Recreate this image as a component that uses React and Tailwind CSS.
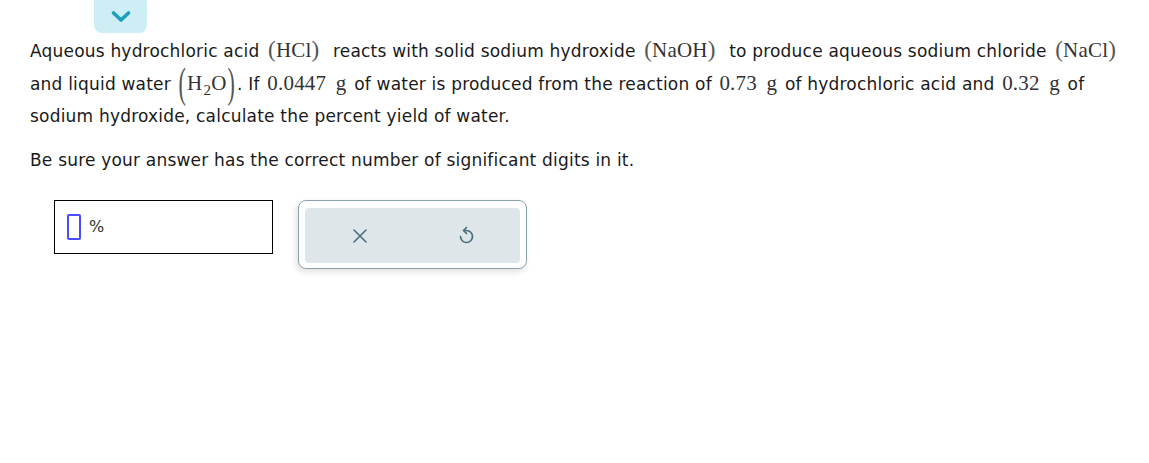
import React from "react";

const SERIF = { fontFamily: '"Liberation Serif", serif' };

const M = ({ children, className = "" }) => (
  <span className={`text-[#333] text-[21px] ${className}`} style={SERIF}>
    {children}
  </span>
);

const P = ({ children }) => (
  <span className="inline-block text-[#555] text-[23px] leading-[20px]" style={SERIF}>
    {children}
  </span>
);

const BP = ({ children }) => (
  <span
    className="inline-block text-[#555] text-[22px] leading-[20px] scale-y-[1.95] origin-center px-[1px]"
    style={SERIF}
  >
    {children}
  </span>
);

export default function App() {
  return (
    <div
      className="w-[1149px] h-[463px] bg-white text-[#1a1a1a] text-[17px] tracking-[0.2px]"
      style={{ fontFamily: '"DejaVu Sans", Verdana, sans-serif' }}
    >
      <div className="ml-[94px] w-[53px] h-[33px] bg-[#cdeef4] rounded-b-lg flex items-center justify-center">
        <svg width="22" height="13" viewBox="0 0 22 13">
          <path d="M3.5 3 L11 10 L18.5 3" fill="none" stroke="#1a9fbe" strokeWidth="3.6" strokeLinecap="round" strokeLinejoin="round" />
        </svg>
      </div>
      <div className="pl-[30px] mt-[1px] leading-[32px] whitespace-nowrap">
        <div>
          Aqueous hydrochloric acid{" "}
          <M className="ml-[3px] mr-[8px]"><P>(</P>HCl<P>)</P></M>{" "}
          reacts with solid sodium hydroxide{" "}
          <M className="ml-[3px] mr-[8px]"><P>(</P>NaOH<P>)</P></M>{" "}
          to produce aqueous sodium chloride{" "}
          <M className="ml-[3px]"><P>(</P>NaCl<P>)</P></M>
        </div>
        <div>
          and liquid water{" "}
          <M className="ml-[1px] mr-[1px]"><BP>(</BP>H<sub className="text-[15px] relative top-[5px] ml-[1px]">2</sub>O<BP>)</BP></M>. If{" "}
          <M className="mx-[2px]">0.0447</M> <M className="mx-[2px]">g</M> of water is produced from the reaction of{" "}
          <M className="mx-[2px]">0.73</M> <M className="mx-[2px]">g</M> of hydrochloric acid and{" "}
          <M className="mx-[2px]">0.32</M> <M className="mx-[2px]">g</M> of
        </div>
        <div>sodium hydroxide, calculate the percent yield of water.</div>
        <div className="mt-[12px]">Be sure your answer has the correct number of significant digits in it.</div>
      </div>
      <div className="flex items-start gap-[25px] ml-[54px] mt-[24px]">
        <div className="w-[219px] h-[54px] border border-black flex items-center pl-[12px] gap-[8px]">
          <div className="w-[14px] h-[26px] border-2 border-[#4b4bff] rounded-[2px]" />
          <span className="text-[16px] text-[#333] tracking-normal">%</span>
        </div>
        <div className="w-[229px] h-[69px] border border-[#8aa3ab] rounded-[8px] bg-white shadow-[-2px_3px_6px_rgba(0,0,0,0.12)] pl-[6px] pr-[6px] pt-[7px]">
          <div className="h-[55px] bg-[#dfe6e9] rounded-[4px] flex items-center justify-around pl-[2px]">
            <svg width="16" height="16" viewBox="0 0 16 16">
              <path d="M2 2 L14 14 M14 2 L2 14" stroke="#4b6e79" strokeWidth="1.6" strokeLinecap="round" />
            </svg>
            <svg width="18" height="20" viewBox="0 0 18 20">
              <path d="M7 4.5 H9.5 A6 6 0 1 1 3.5 10.5" fill="none" stroke="#4b6e79" strokeWidth="1.7" strokeLinecap="round" />
              <path d="M9.5 1.5 L6.5 4.5 L9.5 7.5" fill="none" stroke="#4b6e79" strokeWidth="1.7" strokeLinecap="round" strokeLinejoin="round" />
            </svg>
          </div>
        </div>
      </div>
    </div>
  );
}
